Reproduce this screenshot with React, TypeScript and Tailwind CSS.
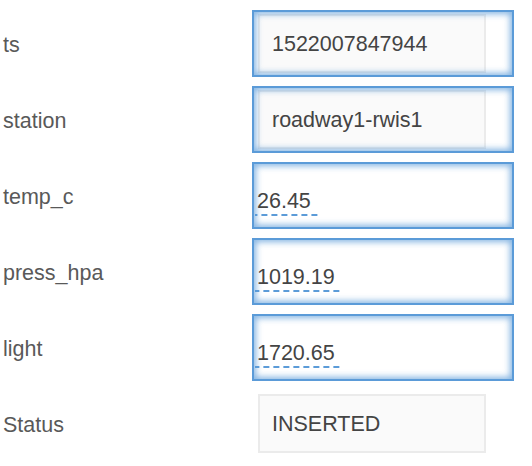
import React from "react";

const font = { fontFamily: '"Liberation Sans", Arial, Helvetica, sans-serif' };

function Label({ children }: { children: React.ReactNode }) {
  return (
    <div className="mt-[4px] w-[252px] shrink-0 pl-[3px] text-[21.5px] text-[#595959]">{children}</div>
  );
}

function GrayBox({ value }: { value: string }) {
  return (
    <div className="ml-[6px] mt-[4px] flex h-[59px] w-[228px] items-center border-2 border-[#ebebeb] bg-[#fafafa] pl-[12px] pt-px text-[21.5px] text-[#444444]">
      {value}
    </div>
  );
}

function FocusRow({ label, value }: { label: string; value: string }) {
  return (
    <div className="flex h-[67px] items-center">
      <Label>{label}</Label>
      <div className="relative h-[67px] w-[262px] shrink-0 bg-white">
        <GrayBox value={value} />
        <div className="pointer-events-none absolute inset-0 border-2 border-[#5b9bd8] shadow-[inset_0_0_6px_2px_rgba(91,155,216,0.75)]" />
      </div>
    </div>
  );
}

function EditRow({ label, value }: { label: string; value: string }) {
  return (
    <div className="flex h-[67px] items-center">
      <Label>{label}</Label>
      <div className="h-[67px] w-[262px] shrink-0 border-2 border-[#5b9bd8] bg-white pl-px pt-[25px] shadow-[inset_0_0_6px_2px_rgba(91,155,216,0.75)]">
        <span className="block w-fit bg-[linear-gradient(to_right,#5b9bd8_6px,transparent_6px)] bg-[length:10px_2px] bg-bottom bg-repeat-x pb-[3px] pl-[2px] pr-[7px] text-[21.5px] leading-[24px] text-[#444444]">
          {value}
        </span>
      </div>
    </div>
  );
}

export default function App() {
  return (
    <div className="h-[466px] w-[532px] bg-white pt-[10px]" style={font}>
      <div className="flex flex-col gap-[9px]">
        <FocusRow label="ts" value="1522007847944" />
        <FocusRow label="station" value="roadway1-rwis1" />
        <EditRow label="temp_c" value="26.45" />
        <EditRow label="press_hpa" value="1019.19" />
        <EditRow label="light" value="1720.65" />
        <div className="flex h-[67px] items-center">
          <Label>Status</Label>
          <div className="h-[67px] w-[262px] shrink-0">
            <GrayBox value="INSERTED" />
          </div>
        </div>
      </div>
    </div>
  );
}
